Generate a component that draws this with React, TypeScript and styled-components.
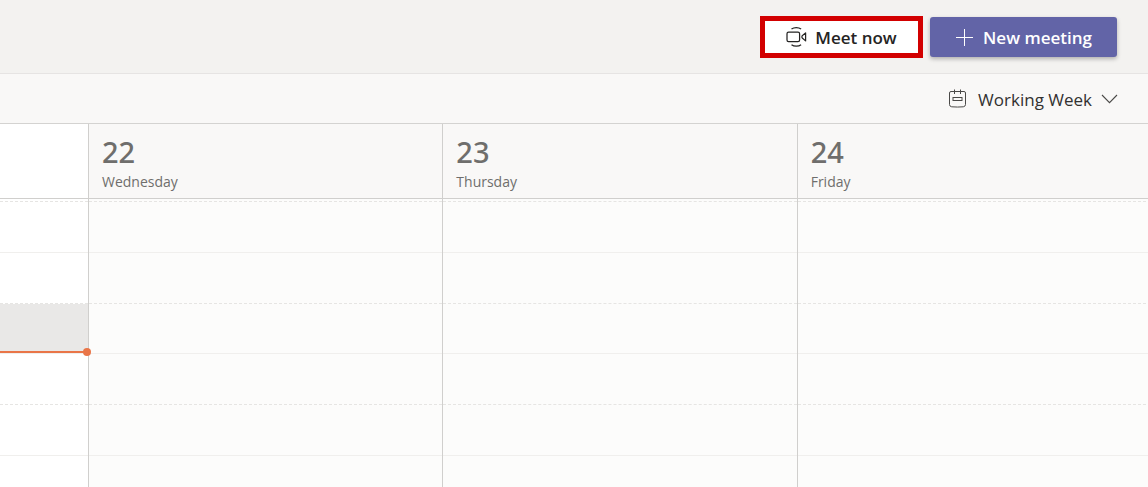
import React from "react";
import styled, { createGlobalStyle, css } from "styled-components";

const GlobalStyle = createGlobalStyle`
  * { box-sizing: border-box; }
  html, body { margin: 0; padding: 0; }
  body {
    background: #f9f8f7;
    color: #252423;
    font-family: "Open Sans", "Noto Sans", sans-serif;
  }
  button { font-family: inherit; cursor: pointer; }
`;

const Page = styled.div`
  display: flex;
  flex-direction: column;
  height: 100vh;
  overflow: hidden;
`;

const TopBar = styled.header`
  display: flex;
  flex: none;
  justify-content: flex-end;
  align-items: center;
  gap: 7px;
  height: 74px;
  padding: 0 31px 0 16px;
  background: #f3f2f0;
  border-bottom: 1px solid #e6e4e3;
`;

const ActionButton = styled.button<{ $primary?: boolean }>`
  display: flex;
  align-items: center;
  justify-content: center;
  gap: 8px;
  height: 42px;
  width: 163px;
  padding: 0;
  border: 5px solid #d20000;
  background: #fff;
  color: #252423;
  font-size: 17px;
  line-height: 24px;
  font-weight: 600;
  white-space: nowrap;
  ${(p) =>
    p.$primary &&
    css`
      gap: 10px;
      height: 40px;
      width: 187px;
      border: 0;
      border-radius: 3px;
      background: #6264a7;
      color: #fff;
      box-shadow: 0 2px 4px rgba(0, 0, 0, 0.28);
    `}
`;

const ActionLabel = styled.span`
  padding-top: 2px;
`;

const ViewBar = styled.div`
  display: flex;
  flex: none;
  justify-content: flex-end;
  align-items: center;
  height: 50px;
  padding: 2px 30px 0 16px;
  border-bottom: 1px solid #d4d3d1;
`;

const ViewButton = styled.button`
  display: flex;
  align-items: center;
  padding: 0;
  border: 0;
  background: none;
  color: #323130;
  font-size: 17px;
  line-height: 24px;
  white-space: nowrap;
`;

const ViewLabel = styled.span`
  margin: 0 9px 0 11px;
`;

const Calendar = styled.main`
  display: grid;
  flex: 1;
  grid-template-columns: 88px repeat(3, minmax(0, 1fr));
  min-height: 0;
  margin-right: -3px;
`;

const Day = styled.section<{ $blank?: boolean }>`
  display: flex;
  flex-direction: column;
  min-height: 0;
  background: ${(p) => (p.$blank ? "#fff" : "#fcfcfb")};
  border-left: ${(p) => (p.$blank ? "0" : "1px solid #d0cfcd")};
`;

const DayHeader = styled.div<{ $blank?: boolean }>`
  flex: none;
  height: 75px;
  padding: 10px 13px 0;
  background: ${(p) => (p.$blank ? "#fff" : "#f9f8f7")};
  border-bottom: 1px solid #d0cfcd;
  color: #6f6e6c;
`;

const DayNumber = styled.div`
  font-family: "Noto Sans", sans-serif;
  font-size: 29px;
  line-height: 36px;
  font-weight: 500;
`;

const DayName = styled.div`
  padding-top: 1px;
  font-size: 14px;
  line-height: 22px;
`;

const Slots = styled.div`
  display: grid;
  flex: none;
  grid-template-rows: repeat(6, 1fr);
  height: 305px;
  margin-top: 2px;
`;

const Slot = styled.div<{ $half?: boolean; $selected?: boolean }>`
  position: relative;
  border-top: 1px ${(p) => (p.$half ? "dashed #e6e5e3" : "solid #f0efed")};
  background: ${(p) => (p.$selected ? "#e9e8e7" : "transparent")};
  background-clip: padding-box;
`;

const NowLine = styled.div`
  position: absolute;
  left: 0;
  right: 0;
  bottom: 0;
  height: 2px;
  background: #e97548;
  z-index: 1;

  &::after {
    content: "";
    position: absolute;
    right: -3px;
    top: -3px;
    width: 8px;
    height: 8px;
    border-radius: 50%;
    background: #e97548;
  }
`;

const MeetIcon = () => (
  <svg width="21" height="22" viewBox="0 0 21 22" fill="none" stroke="currentColor" strokeWidth="1.25" aria-hidden="true">
    <rect x="1" y="6.2" width="12.6" height="9.4" rx="1.6" />
    <path d="M19.6 6.9v8l-3.1-2.7a1.7 1.7 0 0 1 0-2.6z" strokeLinejoin="round" />
    <path d="M5.5 3.1C8.2 1.1 12.4 1.1 15.1 3.1M5.5 18.7c2.7 2 6.9 2 9.6 0" />
  </svg>
);

const PlusIcon = () => (
  <svg width="18" height="20" viewBox="0 0 18 20" fill="none" stroke="currentColor" aria-hidden="true">
    <path d="M9.5 2v17M1 10.5h17" />
  </svg>
);

const CalendarIcon = () => (
  <svg width="19" height="24" viewBox="0 0 19 24" fill="none" stroke="#4a4947" aria-hidden="true">
    <path d="M3 3.5h13q1.5 0 1.5 1.5v11.5q0 2-2.2 2.3q-5.8.5-11.6 0q-2.2-.3-2.2-2.3V5q0-1.5 1.5-1.5z" />
    <path d="M6.5 1.5v4.5M12.5 1.5v4.5" />
    <rect x="5" y="9.5" width="9" height="3" />
  </svg>
);

const ChevronIcon = () => (
  <svg width="17" height="12" viewBox="0 0 17 12" fill="none" stroke="#4a4947" strokeWidth="1.1" aria-hidden="true">
    <path d="M1 1l7.5 7.7L16 1" />
  </svg>
);

const days = [
  { number: 22, name: "Wednesday" },
  { number: 23, name: "Thursday" },
  { number: 24, name: "Friday" },
];

const slots = [0, 1, 2, 3, 4, 5];
const currentSlot = 2;

export default function App() {
  return (
    <Page>
      <GlobalStyle />
      <TopBar>
        <ActionButton type="button">
          <MeetIcon />
          <ActionLabel>Meet now</ActionLabel>
        </ActionButton>
        <ActionButton type="button" $primary>
          <PlusIcon />
          <ActionLabel>New meeting</ActionLabel>
        </ActionButton>
      </TopBar>
      <ViewBar>
        <ViewButton type="button" aria-haspopup="menu">
          <CalendarIcon />
          <ViewLabel>Working Week</ViewLabel>
          <ChevronIcon />
        </ViewButton>
      </ViewBar>
      <Calendar>
        <Day $blank>
          <DayHeader $blank />
          <Slots>
            {slots.map((i) => (
              <Slot key={i} $half={i % 2 === 0} $selected={i === currentSlot}>
                {i === currentSlot && <NowLine />}
              </Slot>
            ))}
          </Slots>
        </Day>
        {days.map((day) => (
          <Day key={day.number}>
            <DayHeader>
              <DayNumber>{day.number}</DayNumber>
              <DayName>{day.name}</DayName>
            </DayHeader>
            <Slots>
              {slots.map((i) => (
                <Slot key={i} $half={i % 2 === 0} />
              ))}
            </Slots>
          </Day>
        ))}
      </Calendar>
    </Page>
  );
}
